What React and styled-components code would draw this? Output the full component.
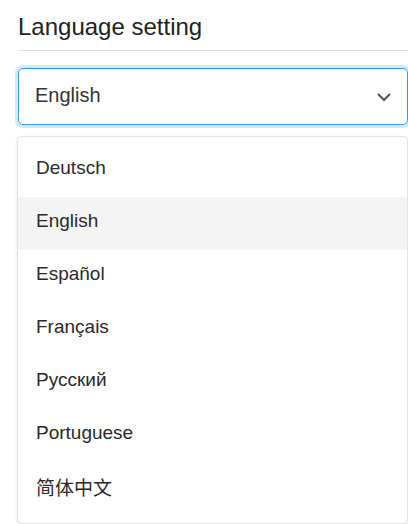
import React, { Component } from "react";
import styled, { createGlobalStyle } from "styled-components";

const GlobalStyle = createGlobalStyle`
  body {
    margin: 0;
    background: #ffffff;
    font-family: "Liberation Sans", "Noto Sans CJK SC", sans-serif;
    color: #212529;
  }
`;

const languages = [
  "Deutsch",
  "English",
  "Español",
  "Français",
  "Русский",
  "Portuguese",
  "简体中文"
];

const Wrapper = styled.div`
  width: 390px;
  padding: 13px 0 0 18px;
`;

const Title = styled.h2`
  margin: 0;
  padding-bottom: 9px;
  font-size: 24px;
  font-weight: 400;
  line-height: 28px;
  color: #222;
  border-bottom: 1px solid #dee2e6;
`;

const Select = styled.div`
  margin-top: 17px;
  height: 57px;
  box-sizing: border-box;
  display: flex;
  align-items: center;
  justify-content: space-between;
  padding: 0 15px 3px 16px;
  border: 1px solid #2e9bf0;
  border-radius: 5px;
  box-shadow: 0 0 0 3px rgba(46, 140, 230, 0.2);
  font-size: 20px;
  color: #333;

  svg {
    margin-top: 3px;
  }
`;

const Menu = styled.ul`
  list-style: none;
  margin: 11px 0 0 -1px;
  padding: 7px 0 8px;
  border: 1px solid #e4e4e4;
  border-radius: 5px;
  box-shadow: 0 1px 3px rgba(0, 0, 0, 0.12);
  background: #fff;
`;

const Item = styled.li`
  height: 53px;
  box-sizing: border-box;
  display: flex;
  align-items: center;
  padding: 0 18px 5px;
  font-size: 19px;
  color: #2a2a2a;
  background: ${props => (props.active ? "#f4f4f4" : "transparent")};
`;

class App extends Component {
  render() {
    return (
      <Wrapper>
        <GlobalStyle />
        <Title>Language setting</Title>
        <Select>
          <span>English</span>
          <svg width="16" height="10" viewBox="0 0 16 10">
            <path
              d="M2 2l6 6 6-6"
              fill="none"
              stroke="#555"
              strokeWidth="2"
            />
          </svg>
        </Select>
        <Menu>
          {languages.map(lang => (
            <Item key={lang} active={lang === "English"}>
              {lang}
            </Item>
          ))}
        </Menu>
      </Wrapper>
    );
  }
}

export default App;
